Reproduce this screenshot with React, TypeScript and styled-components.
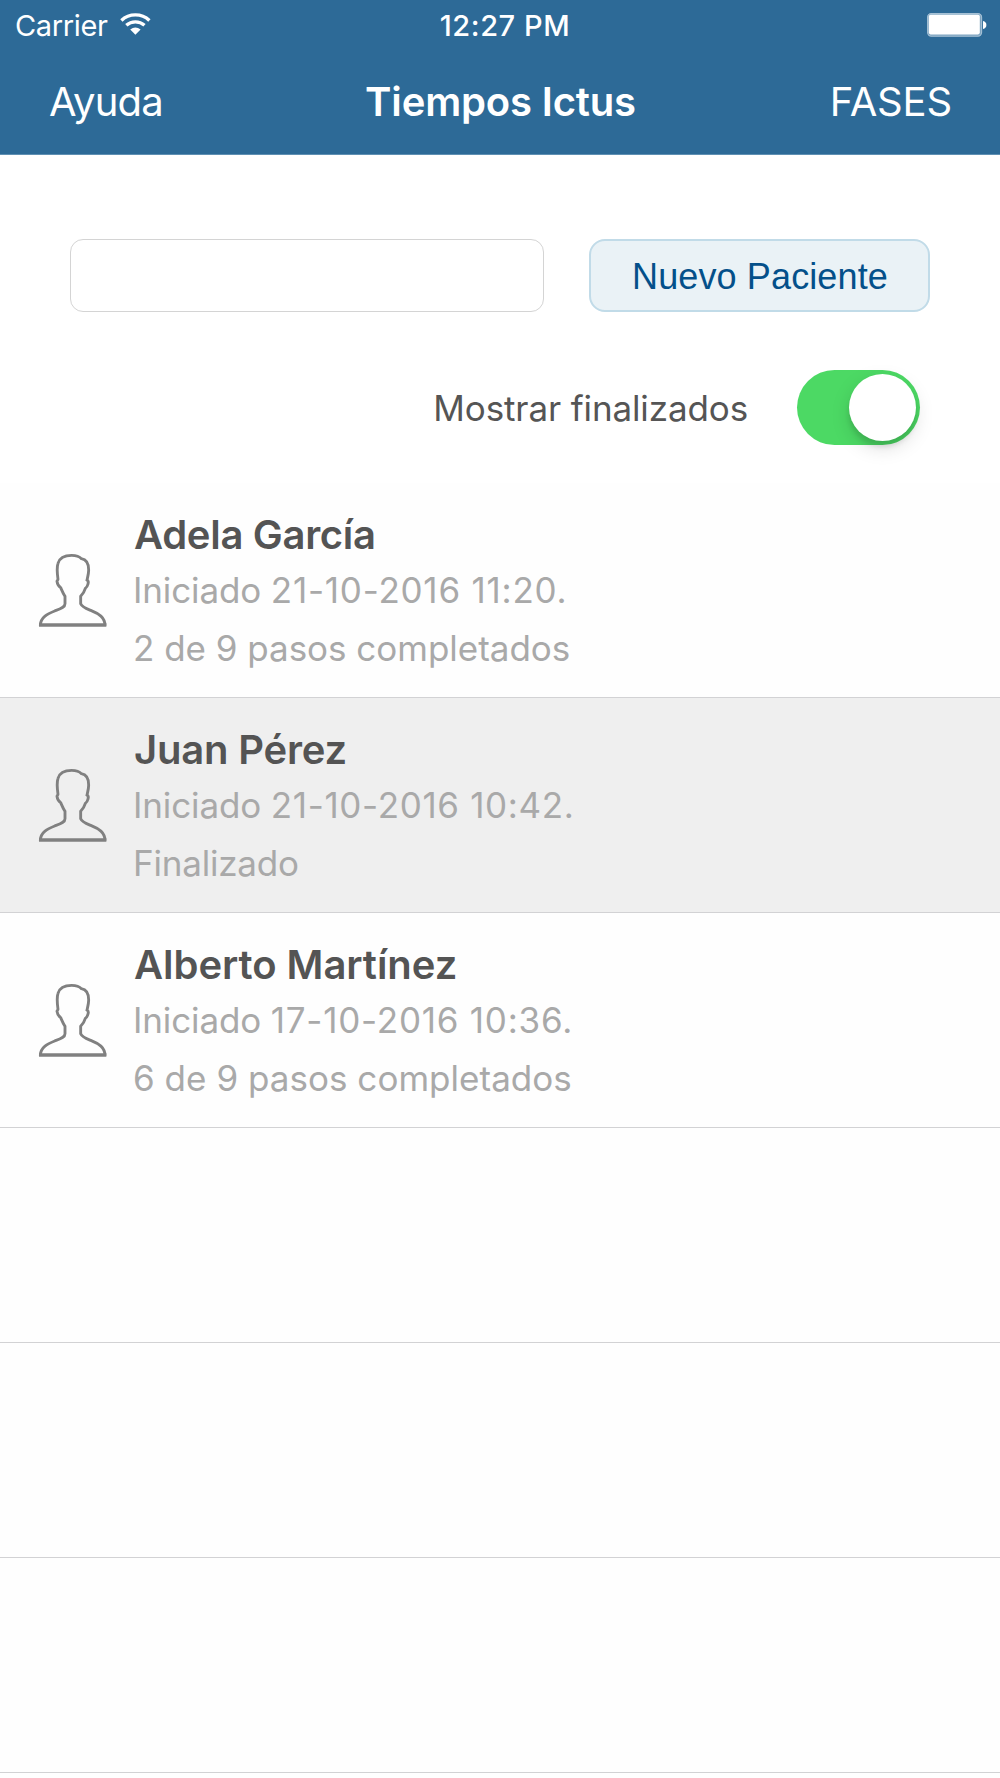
import React, { useState } from 'react';
import styled, { createGlobalStyle } from 'styled-components';

const GlobalStyle = createGlobalStyle`
  *, *::before, *::after { box-sizing: border-box; }
  body {
    margin: 0;
    background: #fff;
    font-family: Inter, "Liberation Sans", sans-serif;
    font-kerning: normal;
  }
`;

const Screen = styled.div`
  display: flex;
  flex-direction: column;
  width: 1000px;
  height: 1778px;
  overflow: hidden;
  background: #fff;
`;

const Header = styled.header`
  height: 155px;
  flex: none;
  color: #fff;
  background: #2d6a97;
  border-bottom: 1px solid #5f90b3;
`;

const StatusBar = styled.div`
  display: grid;
  grid-template-columns: 1fr auto 1fr;
  height: 50px;
  padding: 0 13px 0 15px;
  font-size: 29px;
  line-height: 52px;
`;

const Carrier = styled.div`
  display: flex;
  align-items: flex-start;
  gap: 12px;
  letter-spacing: -0.36px;

  svg { margin-top: 12px; }
`;

const Clock = styled.time`
  padding-left: 8px;
  font-weight: 500;
  letter-spacing: 0.59px;
`;

const Battery = styled.div`
  display: flex;
  justify-content: flex-end;
  padding-top: 13px;
`;

const NavBar = styled.nav`
  display: grid;
  grid-template-columns: 1fr auto 1fr;
  height: 104px;
  padding: 0 48px 0 49px;
  font-size: 40px;
  line-height: 103px;
`;

const NavAction = styled.a<{ $end?: boolean; $tracking: number }>`
  justify-self: ${p => (p.$end ? 'end' : 'start')};
  letter-spacing: ${p => p.$tracking}px;
`;

const Title = styled.h1`
  margin: 0;
  font: inherit;
  font-weight: 600;
  letter-spacing: -0.16px;
`;

const NewPatient = styled.form`
  display: flex;
  justify-content: space-between;
  flex: none;
  height: 73px;
  margin: 84px 70px 0;
`;

const NameInput = styled.input`
  width: 474px;
  padding: 0 16px;
  border: 1px solid #d4d4d4;
  border-radius: 13px;
  background: #fff;
  font: 35px Inter, sans-serif;
  outline: none;
`;

const AddButton = styled.button`
  width: 341px;
  padding: 3px 0 0 1px;
  border: 2px solid #c1dbe8;
  border-radius: 16px;
  background: #eaf2f6;
  color: #04508a;
  font: 36px "Liberation Sans", Arial, sans-serif;
  letter-spacing: 0.12px;
`;

const Filter = styled.label`
  display: flex;
  align-items: center;
  justify-content: flex-end;
  gap: 49px;
  flex: none;
  height: 75px;
  margin: 58px 80px 38px 0;
  color: #555;
  font-size: 35px;
  letter-spacing: -0.12px;
`;

const Switch = styled.button<{ $on: boolean }>`
  display: flex;
  justify-content: ${p => (p.$on ? 'flex-end' : 'flex-start')};
  align-items: center;
  width: 123px;
  height: 75px;
  padding: 0 4px;
  border: 0;
  border-radius: 38px;
  background: ${p => (p.$on ? '#4cd964' : '#e5e5e5')};
`;

const Knob = styled.span`
  width: 67px;
  height: 67px;
  border-radius: 50%;
  background: #fff;
  box-shadow: 0 7px 19px rgba(0, 0, 0, 0.13), 0 6px 5px rgba(0, 0, 0, 0.1);
`;

const List = styled.ul`
  margin: 0;
  padding: 0;
  list-style: none;
`;

const Row = styled.li<{ $done?: boolean }>`
  display: flex;
  gap: 26px;
  height: 215px;
  padding: 26px 38px 0;
  border-bottom: 1px solid #d2d2d4;
  background: ${p => (p.$done ? '#efefef' : '#fefefe')};

  > svg { flex: none; margin-top: 44px; }
`;

const Details = styled.div`
  display: flex;
  flex-direction: column;
  white-space: nowrap;
`;

const Name = styled.strong<{ $tracking: number }>`
  padding-left: 1px;
  color: #545454;
  font-size: 40px;
  font-weight: 600;
  line-height: 52px;
  letter-spacing: ${p => p.$tracking}px;
`;

const Line = styled.span<{ $tracking: number }>`
  color: #a9a9a9;
  font-size: 35px;
  line-height: 58px;
  letter-spacing: ${p => p.$tracking}px;
`;

const Stamp = styled.time<{ $tracking: number }>`
  letter-spacing: ${p => p.$tracking}px;
`;

const WifiIcon = () => (
  <svg width="31" height="24" viewBox="0 0 31 24" fill="none">
    <path d="M1.4 8.4A20.5 20.5 0 0 1 29.4 8.4" stroke="#fff" strokeWidth="3.4" />
    <path d="M6.3 13.3A13.6 13.6 0 0 1 24.5 13.3" stroke="#fff" strokeWidth="3.3" />
    <path d="M10.2 17.6Q15.4 13.4 20.6 17.6L15.4 22.8Z" fill="#fff" />
  </svg>
);

const BatteryIcon = () => (
  <svg width="60" height="24" viewBox="0 0 60 24">
    <rect x="0.6" y="0.6" width="54" height="22.6" rx="3.6" fill="#7fa5c1" stroke="#a6c1d5" strokeWidth="1.1" />
    <rect x="1.8" y="1.8" width="51" height="19.6" rx="1.8" fill="#fff" />
    <path d="M56 8C58.3 8.6 59.4 10 59.4 12S58.3 15.4 56 16Z" fill="#fff" />
  </svg>
);

const PersonIcon = () => (
  <svg width="69" height="75" viewBox="54 159 207 225" fill="none" stroke="#808080">
    <path
      strokeWidth="8.6"
      d="M61 377C61 351 84 341 104 333C122 326 135 322 135 311V289C130 282 126 272 122 263C116 259 112 252 111 244C111 241 114 241 114 238C111 216 110 202 114 190C119 172 136 166 155 166C170 166 178 169 184 176C197 178 206 190 206 210C206 222 203 231 201 240C206 243 206 246 204 252C202 260 199 263 196 265C193 275 188 283 182 289V311C186 321 200 326 214 332C236 341 255 352 255 377"
    />
    <path strokeWidth="10.5" d="M57 374.8H259" />
  </svg>
);

type Patient = {
  name: string;
  started: string;
  status: string;
  done?: boolean;
  tracking: [number, number, number];
};

const patients: Patient[] = [
  {
    name: 'Adela García',
    started: '21-10-2016 11:20.',
    status: '2 de 9 pasos completados',
    tracking: [-0.3, 0.78, -0.02],
  },
  {
    name: 'Juan Pérez',
    started: '21-10-2016 10:42.',
    status: 'Finalizado',
    done: true,
    tracking: [-0.2, 0.66, -0.2],
  },
  {
    name: 'Alberto Martínez',
    started: '17-10-2016 10:36.',
    status: '6 de 9 pasos completados',
    tracking: [-0.05, 0.77, 0.03],
  },
];

export default function App() {
  const [showDone, setShowDone] = useState(true);
  const [name, setName] = useState('');
  const visible = patients.filter(p => showDone || !p.done);

  return (
    <Screen>
      <GlobalStyle />
      <Header>
        <StatusBar>
          <Carrier>Carrier<WifiIcon /></Carrier>
          <Clock>12:27 PM</Clock>
          <Battery><BatteryIcon /></Battery>
        </StatusBar>
        <NavBar>
          <NavAction $tracking={-0.8}>Ayuda</NavAction>
          <Title>Tiempos Ictus</Title>
          <NavAction $end $tracking={-0.15}>FASES</NavAction>
        </NavBar>
      </Header>
      <NewPatient onSubmit={e => e.preventDefault()}>
        <NameInput value={name} onChange={e => setName(e.target.value)} />
        <AddButton type="submit">Nuevo Paciente</AddButton>
      </NewPatient>
      <Filter>
        Mostrar finalizados
        <Switch type="button" role="switch" aria-checked={showDone} $on={showDone} onClick={() => setShowDone(!showDone)}>
          <Knob />
        </Switch>
      </Filter>
      <List>
        {visible.map(p => (
          <Row key={p.name} $done={p.done}>
            <PersonIcon />
            <Details>
              <Name $tracking={p.tracking[0]}>{p.name}</Name>
              <Line $tracking={-0.13}>
                Iniciado <Stamp $tracking={p.tracking[1]}>{p.started}</Stamp>
              </Line>
              <Line $tracking={p.tracking[2]}>{p.status}</Line>
            </Details>
          </Row>
        ))}
        {Array.from({ length: 6 - visible.length }, (_, i) => <Row key={i} />)}
      </List>
    </Screen>
  );
}
